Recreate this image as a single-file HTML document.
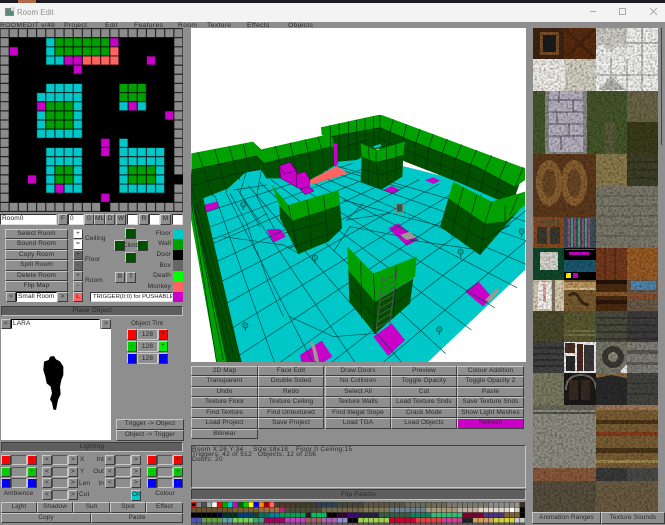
<!DOCTYPE html>
<html><head><meta charset="utf-8"><title>Room Edit</title>
<style>
html,body{margin:0;padding:0;width:665px;height:525px;overflow:hidden;background:#8e8e8e}
body{position:relative;font-family:"Liberation Sans",sans-serif;font-size:7px;color:#2a2a2a}
div{position:absolute;box-sizing:border-box;white-space:pre}
svg{position:absolute;display:block}
.b{background:#8e8e8e;border:1px solid;border-color:#c8c8c8 #3c3c3c #3c3c3c #c8c8c8;text-align:center;line-height:8px;font-size:6.5px;letter-spacing:.1px;overflow:hidden}
.w{background:#fff;border:1px solid;border-color:#333 #ddd #ddd #333;line-height:8px;padding-left:1px;font-size:6.5px;letter-spacing:.1px;color:#222;overflow:hidden}
.t{letter-spacing:.1px;font-size:6.5px;line-height:8px}
.d{background:#5e5e5e;border:1px solid;border-color:#3c3c3c #c0c0c0 #c0c0c0 #3c3c3c;text-align:center;line-height:8px;font-size:6.5px;letter-spacing:.2px}
.f{background:#8e8e8e;border:1px solid;border-color:#555 #c8c8c8 #c8c8c8 #555}
.r{text-align:right}
.m{top:22px;height:7px;line-height:7px;font-size:6.8px;letter-spacing:.3px}
</style></head><body>
<!-- title bar -->
<div style="left:0;top:0;width:665px;height:3px;background:#1c1a20"></div>
<div style="left:18px;top:0;width:18px;height:3px;background:#b06a4a"></div>
<div style="left:0;top:3px;width:665px;height:19px;background:#f3f3f3"></div>
<div style="left:5px;top:8px;width:9px;height:8px;background:#5a8a78;border:1px solid #888"></div>
<div style="left:11px;top:7px;width:4px;height:4px;background:#d8d8d8"></div>
<div style="left:17px;top:6px;font-size:7.8px;letter-spacing:.05px;color:#8f8f8f;line-height:13px">Room Edit</div>
<div style="left:590px;top:11px;width:6px;height:1px;background:#aaa"></div>
<div style="left:619px;top:8px;width:7px;height:7px;border:1px solid #aaa"></div>
<svg style="left:650px;top:8px" width="7" height="7" viewBox="0 0 7 7"><path d="M0 0L7 7M7 0L0 7" stroke="#aaa" stroke-width="1"/></svg>
<!-- menu -->
<div class="m" style="left:0">ROOMEDIT v/49</div>
<div class="m" style="left:64px">Project</div>
<div class="m" style="left:105px">Edit</div>
<div class="m" style="left:134px">Features</div>
<div class="m" style="left:178px">Room</div>
<div class="m" style="left:207px">Texture</div>
<div class="m" style="left:247px">Effects</div>
<div class="m" style="left:288px">Objects</div>

<!-- map -->
<svg style="left:0;top:28px" width="183" height="184" viewBox="0 0 20 20">
<rect width="20" height="20" fill="#000"/>
<g fill="none" stroke-width="1">
<path stroke="#8c8c8c" d="M0 .5h20M0 19.5h11M12 19.5h8M.5 1v18M19.5 1v15M19.5 17v2"/>
<path stroke="#00c8c8" d="M5 1.5h1M5 2.5h1M5 3.5h2M5 6.5h4M4 7.5h5M8 8.5h1M13 8.5h1M15 8.5h1M4 9.5h1M8 9.5h1M4 10.5h1M8 10.5h1M4 11.5h5M13 12.5h1M5 13.5h4M13 13.5h5M5 14.5h4M13 14.5h5M5 15.5h1M8 15.5h1M13 15.5h1M17 15.5h1M5 16.5h1M8 16.5h1M13 16.5h1M17 16.5h1M5 17.5h1M7 17.5h2M13 17.5h5"/>
<path stroke="#00a000" d="M6 1.5h6M6 2.5h6M13 6.5h3M13 7.5h3M5 8.5h3M5 9.5h3M5 10.5h3M6 15.5h2M14 15.5h3M6 16.5h2M14 16.5h3"/>
<path stroke="#c800c8" d="M12 1.5h1M1 2.5h1M7 3.5h2M16 3.5h1M8 4.5h1M4 8.5h1M14 8.5h1M18 9.5h1M11 12.5h1M11 13.5h1M3 16.5h1M6 17.5h1M11 18.5h1"/>
<path stroke="#ff6460" d="M12 2.5h1M9 3.5h4"/>
</g>
<path fill="none" stroke="#000" stroke-opacity=".75" stroke-width=".13" d="M0 0v20M1 0v20M2 0v20M3 0v20M4 0v20M5 0v20M6 0v20M7 0v20M8 0v20M9 0v20M10 0v20M11 0v20M12 0v20M13 0v20M14 0v20M15 0v20M16 0v20M17 0v20M18 0v20M19 0v20M20 0v20M0 0h20M0 1h20M0 2h20M0 3h20M0 4h20M0 5h20M0 6h20M0 7h20M0 8h20M0 9h20M0 10h20M0 11h20M0 12h20M0 13h20M0 14h20M0 15h20M0 16h20M0 17h20M0 18h20M0 19h20M0 20h20"/>
</svg>

<!-- room name row -->
<div class="w" style="left:0;top:214px;width:57px;height:11px">Room0</div>
<div class="b" style="left:58px;top:214px;width:10px;height:11px">F</div>
<div class="w" style="left:68px;top:214px;width:16px;height:11px">0</div>
<div class="b" style="left:84px;top:214px;width:10px;height:11px">0</div>
<div class="b" style="left:94px;top:214px;width:11px;height:11px">ML</div>
<div class="b" style="left:105px;top:214px;width:10px;height:11px">D</div>
<div class="b" style="left:116px;top:214px;width:10px;height:11px">W</div>
<div class="w" style="left:127px;top:214px;width:11px;height:11px"></div>
<div class="b" style="left:139px;top:214px;width:10px;height:11px">R</div>
<div class="w" style="left:149px;top:214px;width:11px;height:11px"></div>
<div class="b" style="left:160px;top:214px;width:11px;height:11px">M</div>
<div class="w" style="left:172px;top:214px;width:11px;height:11px"></div>

<!-- room buttons -->
<div class="b" style="left:5px;top:229px;width:63px;height:10px">Select Room</div>
<div class="b" style="left:5px;top:239px;width:63px;height:11px">Bound Room</div>
<div class="b" style="left:5px;top:250px;width:63px;height:10px">Copy Room</div>
<div class="b" style="left:5px;top:260px;width:63px;height:11px">Split Room</div>
<div class="b" style="left:5px;top:271px;width:63px;height:10px">Delete Room</div>
<div class="b" style="left:5px;top:281px;width:63px;height:11px">Flip Map</div>
<div class="b" style="left:6px;top:292px;width:10px;height:10px">&lt;</div>
<div class="w" style="left:16px;top:292px;width:41px;height:10px;border-color:#000 #fff #fff #000">Small Room</div>
<div class="b" style="left:57px;top:292px;width:11px;height:10px">&gt;</div>

<div class="b" style="left:73px;top:229px;width:10px;height:10px;background:#fff">+</div>
<div class="b" style="left:73px;top:239px;width:10px;height:11px;background:#fff">=</div>
<div class="b" style="left:73px;top:250px;width:10px;height:10px;background:#666">+</div>
<div class="b" style="left:73px;top:260px;width:10px;height:11px;background:#666">-</div>
<div class="b" style="left:73px;top:271px;width:10px;height:10px">+</div>
<div class="b" style="left:73px;top:281px;width:10px;height:11px">-</div>
<div class="b" style="left:73px;top:292px;width:10px;height:10px;background:#ff6460">L</div>
<div class="t" style="left:85px;top:235px">Ceiling</div>
<div class="t" style="left:85px;top:256px">Floor</div>
<div class="t" style="left:85px;top:277px">Room</div>

<div class="b" style="left:125px;top:228px;width:11px;height:11px;background:#005000"></div>
<div class="b" style="left:114px;top:240px;width:11px;height:11px;background:#005000"></div>
<div class="b" style="left:137px;top:240px;width:11px;height:11px;background:#005000"></div>
<div class="b" style="left:125px;top:252px;width:11px;height:11px;background:#005000"></div>
<div class="t" style="left:118px;top:242px;width:26px;text-align:center;font-size:6px;letter-spacing:0">Climb</div>
<div class="b" style="left:115px;top:272px;width:10px;height:11px">B</div>
<div class="b" style="left:126px;top:272px;width:10px;height:11px">T</div>

<div class="t r" style="left:140px;top:230px;width:31px">Floor</div>
<div class="t r" style="left:140px;top:240px;width:31px">Wall</div>
<div class="t r" style="left:140px;top:251px;width:31px">Door</div>
<div class="t r" style="left:140px;top:262px;width:31px">Box</div>
<div class="t r" style="left:140px;top:272px;width:31px">Death</div>
<div class="t r" style="left:130px;top:283px;width:41px">Monkey</div>
<div style="left:173px;top:229px;width:10px;height:10px;background:#00c8c8"></div>
<div style="left:173px;top:239px;width:10px;height:11px;background:#00a000"></div>
<div style="left:173px;top:250px;width:10px;height:10px;background:#000"></div>
<div style="left:173px;top:260px;width:10px;height:11px;background:#666"></div>
<div style="left:173px;top:271px;width:10px;height:10px;background:#00ff00"></div>
<div style="left:173px;top:281px;width:10px;height:11px;background:#ff6460"></div>
<div style="left:173px;top:292px;width:10px;height:10px;background:#c800c8"></div>
<div class="w" style="left:90px;top:292px;width:83px;height:10px;padding-left:2px;font-size:5.9px;letter-spacing:0">TRIGGER(0:0) for PUSHABLE</div>

<div class="d" style="left:1px;top:306px;width:182px;height:10px">Place Object</div>
<div class="b" style="left:1px;top:319px;width:10px;height:10px">&lt;</div>
<div class="w" style="left:11px;top:319px;width:89px;height:10px;border-color:#000 #fff #fff #000">LARA</div>
<div class="b" style="left:101px;top:319px;width:10px;height:10px">&gt;</div>

<!-- object preview -->
<div style="left:1px;top:329px;width:110px;height:111px;background:#fff"></div>
<svg style="left:1px;top:329px" width="110" height="111" viewBox="3 27 330 333"><path fill="#000" d="M132 125L146 120L150 110L162 108L168 118L180 124L190 140L190 165L184 180L180 200L182 222L174 240L168 270L160 268L156 248L150 238L156 220L152 200L140 190L136 170L130 150Z"/></svg>
<div class="t" style="left:122px;top:320px;width:50px;text-align:center">Object Tint</div>

<div class="b" style="left:127px;top:329px;width:10px;height:11px;background:#f00">-</div>
<div class="b" style="left:137px;top:329px;width:21px;height:11px;line-height:9px;border-color:#c8c8c8">128</div>
<div class="b" style="left:158px;top:329px;width:10px;height:11px;background:#f00">+</div>
<div class="b" style="left:127px;top:341px;width:10px;height:11px;background:#0c0">-</div>
<div class="b" style="left:137px;top:341px;width:21px;height:11px;line-height:9px;border-color:#c8c8c8">128</div>
<div class="b" style="left:158px;top:341px;width:10px;height:11px;background:#0e0">+</div>
<div class="b" style="left:127px;top:353px;width:10px;height:11px;background:#00f">-</div>
<div class="b" style="left:137px;top:353px;width:21px;height:11px;line-height:9px;border-color:#c8c8c8">128</div>
<div class="b" style="left:158px;top:353px;width:10px;height:11px;background:#00f">+</div>

<div class="b" style="left:116px;top:419px;width:68px;height:11px">Trigger -&gt; Object</div>
<div class="b" style="left:116px;top:430px;width:68px;height:11px">Object -&gt; Trigger</div>

<div class="d" style="left:1px;top:442px;width:182px;height:10px">Lighting</div>

<!-- ambience -->
<div class="b" style="left:1px;top:455px;width:10px;height:10px;background:#f00">-</div><div class="f" style="left:11px;top:455px;width:16px;height:10px"></div><div class="b" style="left:27px;top:455px;width:10px;height:10px;background:#f00">+</div>
<div class="b" style="left:1px;top:467px;width:10px;height:10px;background:#0c0">-</div><div class="f" style="left:11px;top:467px;width:16px;height:10px"></div><div class="b" style="left:27px;top:467px;width:10px;height:10px;background:#0c0">+</div>
<div class="b" style="left:1px;top:478px;width:10px;height:10px;background:#00f">-</div><div class="f" style="left:11px;top:478px;width:16px;height:10px"></div><div class="b" style="left:27px;top:478px;width:10px;height:10px;background:#00f">+</div>
<div class="t" style="left:0;top:490px;width:37px;text-align:center">Ambience</div>

<!-- X Y Len Cut -->
<div class="b" style="left:42px;top:455px;width:10px;height:10px">&lt;</div><div class="f" style="left:52px;top:455px;width:16px;height:10px"></div><div class="b" style="left:68px;top:455px;width:10px;height:10px">&gt;</div><div class="t" style="left:80px;top:456px">X</div>
<div class="b" style="left:42px;top:467px;width:10px;height:10px">&lt;</div><div class="f" style="left:52px;top:467px;width:16px;height:10px"></div><div class="b" style="left:68px;top:467px;width:10px;height:10px">&gt;</div><div class="t" style="left:80px;top:468px">Y</div>
<div class="b" style="left:42px;top:478px;width:10px;height:10px">&lt;</div><div class="f" style="left:52px;top:478px;width:16px;height:10px"></div><div class="b" style="left:68px;top:478px;width:10px;height:10px">&gt;</div><div class="t" style="left:79px;top:480px">Len</div>
<div class="b" style="left:42px;top:490px;width:10px;height:10px">&lt;</div><div class="f" style="left:52px;top:490px;width:16px;height:10px"></div><div class="b" style="left:68px;top:490px;width:10px;height:10px">&gt;</div><div class="t" style="left:79px;top:491px">Cut</div>

<!-- Int Out In -->
<div class="t r" style="left:90px;top:456px;width:14px">Int</div><div class="b" style="left:105px;top:455px;width:10px;height:10px">&lt;</div><div class="f" style="left:115px;top:455px;width:16px;height:10px"></div><div class="b" style="left:131px;top:455px;width:10px;height:10px">&gt;</div>
<div class="t r" style="left:90px;top:468px;width:14px">Out</div><div class="b" style="left:105px;top:467px;width:10px;height:10px">&lt;</div><div class="f" style="left:115px;top:467px;width:16px;height:10px"></div><div class="b" style="left:131px;top:467px;width:10px;height:10px">&gt;</div>
<div class="t r" style="left:90px;top:480px;width:14px">In</div><div class="b" style="left:105px;top:478px;width:10px;height:10px">&lt;</div><div class="f" style="left:115px;top:478px;width:16px;height:10px"></div><div class="b" style="left:131px;top:478px;width:10px;height:10px">&gt;</div>
<div class="b" style="left:131px;top:490px;width:10px;height:11px;background:#00c8c8">On</div>

<!-- colour -->
<div class="b" style="left:147px;top:455px;width:10px;height:10px;background:#f00">-</div><div class="f" style="left:157px;top:455px;width:16px;height:10px"></div><div class="b" style="left:173px;top:455px;width:10px;height:10px;background:#f00">+</div>
<div class="b" style="left:147px;top:467px;width:10px;height:10px;background:#0c0">-</div><div class="f" style="left:157px;top:467px;width:16px;height:10px"></div><div class="b" style="left:173px;top:467px;width:10px;height:10px;background:#0c0">+</div>
<div class="b" style="left:147px;top:478px;width:10px;height:10px;background:#00f">-</div><div class="f" style="left:157px;top:478px;width:16px;height:10px"></div><div class="b" style="left:173px;top:478px;width:10px;height:10px;background:#00f">+</div>
<div class="t" style="left:147px;top:490px;width:36px;text-align:center">Colour</div>

<div class="b" style="left:1px;top:502px;width:36px;height:11px">Light</div>
<div class="b" style="left:37px;top:502px;width:36px;height:11px">Shadow</div>
<div class="b" style="left:73px;top:502px;width:37px;height:11px">Sun</div>
<div class="b" style="left:110px;top:502px;width:36px;height:11px">Spot</div>
<div class="b" style="left:146px;top:502px;width:37px;height:11px">Effect</div>
<div class="b" style="left:1px;top:513px;width:90px;height:10px">Copy</div>
<div class="b" style="left:91px;top:513px;width:92px;height:10px">Paste</div>

<!-- 3D view -->
<div style="left:191px;top:28px;width:335px;height:334px;background:#fff"></div>
<svg style="left:191px;top:28px" width="335" height="334" viewBox="3 -306 1005 1002">
<polygon fill="#00c8c8" points="0,150 445,60 1005,200 1005,420 710,700 100,700"/>
<g fill="#c800c8">
<polygon points="40,225 80,215 88,232 50,245"/><polygon points="230,298 270,297 288,320 250,338"/><polygon points="595,295 625,280 685,330 650,347"/><polygon points="580,180 605,168 630,180 610,192"/><polygon points="705,150 730,142 750,152 730,162"/><polygon points="825,485 865,455 905,500 880,530"/><polygon points="550,620 605,580 645,630 595,678"/><polygon points="330,675 395,632 427,680 395,700 335,700"/>
</g>
<g stroke="#004848" stroke-width="2" fill="none">
<path d="M49 246L488 100M59 291L534 111M70 340L582 123M82 394L634 135M95 454L689 148M110 520L747 162M127 594L809 177M145 678L876 193M166 772L949 210M190 880L1026 228M218 1004L1109 248"/>
<path d="M74 195L374 1035M107 186L487 930M141 176L589 836M175 167L681 750M209 157L767 671M242 148L844 600M276 138L915 534M310 128L981 473M344 119L1041 417M378 109L1098 364M411 100L1151 316"/>
<path d="M60 330Q150 300 230 250M100 320L280 345L330 372M200 360L240 470L280 560M660 330L870 360M460 210L640 260L760 290M450 120L640 175M300 560L430 620L560 610M430 365L480 290L640 320M520 220L470 270L600 250M120 190L170 280L200 370M169 125L150 190L210 290M214 120L200 200L255 300M130 180L230 165"/>
</g>
<!-- back right wall and apex -->
<polygon fill="#005000" points="393,-8 565,-45 1005,115 975,200 960,225 800,155 645,95 565,55 500,90 445,95 430,100 425,50"/>
<polygon fill="#00a000" points="393,-8 565,-45 570,-7 420,20 395,15"/>
<polygon fill="#00a000" points="565,-45 575,-45 1005,115 1005,150 975,172 860,110 645,25 570,-7"/>
<!-- back left wall -->
<polygon fill="#005000" points="4,120 199,78 222,100 425,50 445,100 432,108 360,150 285,145 229,145 214,120 169,125 114,175 39,205 0,190"/>
<polygon fill="#00a000" points="4,70 189,35 214,58 384,20 425,10 432,50 222,100 199,78 4,120"/>
<!-- left wall -->
<polygon fill="#005000" points="0,125 40,205 155,700 110,700 0,190"/>
<polygon fill="#00a000" points="0,190 110,700 80,700 0,250"/>
<g stroke="#002e10" stroke-width="2" fill="none">
<path d="M4 120L199 78L222 100L425 50M420 20L570 -7L645 25L860 110L975 172M4 168L124 135L209 118M570 25L645 60L860 150L960 200M430 100L430 60L565 20"/>
<path d="M24 68L39 110L56 165L70 200M74 58L86 100L100 150L110 185M118 50L130 93L142 130L150 150M160 42L170 85L178 122"/>
<path d="M256 48L268 90L275 125M300 38L310 80L320 125M345 28L355 68L365 130M384 20L395 58L405 115"/>
<path d="M420 -14L422 50M447 -20L449 95M475 -26L476 90M500 -31L501 80M525 -36L526 75M550 -41L550 60M570 -45L570 -7L565 55"/>
<path d="M610 -32L600 6L595 70M650 -17L640 23L635 90M690 -3L678 38L672 105M730 12L716 53L708 120M772 27L757 69L748 135M815 43L798 85L786 150M860 60L842 103L828 167M905 76L885 123L870 185M950 93L928 147L915 205M1000 111L975 172"/>
<path d="M0 190L80 700M8 220L100 690M15 240L120 690M20 260L135 690M5 170L155 700"/>
</g>
<!-- magenta stack -->
<polygon fill="#c800c8" points="430,40 442,40 443,105 432,108"/>
<polygon fill="#ff6460" points="360,150 440,108 475,130 362,165"/>
<g fill="#c800c8" stroke="#400040" stroke-width="1.5">
<polygon points="268,108 300,96 320,122 320,172 290,155 272,145"/>
<polygon points="268,108 300,96 318,122 283,132"/>
<polygon points="320,132 345,124 358,145 358,175 335,178 320,172"/>
<polygon points="330,178 358,170 372,183 345,194"/>
</g>
<!-- pillar 1 -->
<polygon fill="#005000" points="268,225 305,272 450,225 456,295 415,335 325,372 270,265"/>
<polygon fill="#00a000" points="245,165 295,225 445,180 450,225 305,272 268,225"/>
<g stroke="#002e10" stroke-width="2" fill="none">
<path d="M295 225L305 272M350 210L358 258M400 195L406 242M305 272L325 372M358 258L365 352M406 242L413 335M280 310L415 275M295 355L450 300M270 230L305 272"/>
</g>
<!-- pillar 2 -->
<polygon fill="#005000" points="515,80 558,95 640,75 637,140 575,178 512,155"/>
<polygon fill="#00a000" points="512,40 558,60 645,35 640,75 558,95 515,80"/>
<g stroke="#002e10" stroke-width="2" fill="none">
<path d="M535 50L538 88M558 60L558 95M590 52L590 88M618 43L618 82M515 118L575 135L637 110M538 88L535 165M558 95L565 173M590 88L594 165M618 82L617 150"/>
</g>
<polygon fill="#00c8c8" points="548,50 570,42 575,48 556,55"/>
<!-- pillar 3 -->
<polygon fill="#005000" points="775,205 890,280 1000,225 870,375 750,290"/>
<polygon fill="#00a000" points="790,155 905,215 1005,185 1005,225 945,275 885,280 775,205"/>
<g stroke="#002e10" stroke-width="2" fill="none">
<path d="M820 172L805 225M860 195L845 250M905 215L885 280M945 225L945 275M985 195L960 255M805 225L785 320M845 250L825 345M885 280L870 375M760 255L880 330L960 285"/>
</g>
<!-- pillar 4 -->
<polygon fill="#005000" points="475,420 555,515 670,445 660,520 555,612 478,515"/>
<polygon fill="#00a000" points="472,350 550,430 555,515 475,420"/>
<polygon fill="#00a000" points="680,380 675,440 555,515 550,430"/>
<g stroke="#002e10" stroke-width="2" fill="none">
<path d="M512 395L514 470M510 470L515 565M618 405L615 480M615 480L610 565M477 470L555 565L665 485M550 430L555 515L555 612"/>
</g>
<!-- ladder -->
<g stroke="#505850" stroke-width="3" fill="none">
<path d="M578 440L558 605M622 415L598 590M578 455L620 430M575 475L618 450M573 495L615 470M571 515L612 492M569 535L609 512M566 555L606 532M563 575L602 552M560 595L599 572"/>
</g>
<!-- sprites -->
<g fill="#9a9a92">
<polygon points="360,632 372,640 382,670 388,698 374,692 368,660"/>
<polygon points="630,315 660,305 678,322 650,330"/>
<polygon points="885,510 920,475 930,480 900,515"/>
</g>
<rect x="620" y="222" width="18" height="24" fill="#006860" stroke="#e06040" stroke-width="2"/>
<!-- bulbs -->
<g fill="#00a8a0" stroke="#005040" stroke-width="2">
<circle cx="160" cy="223" r="8"/><circle cx="375" cy="383" r="8"/><circle cx="812" cy="365" r="8"/><circle cx="166" cy="586" r="8"/><circle cx="748" cy="598" r="8"/><circle cx="995" cy="304" r="8"/>
</g>
<g stroke="#304030" stroke-width="3">
<path d="M160 231v9M375 391v9M812 373v9M166 594v9M748 606v9M995 312v9"/>
</g>
</svg>

<!-- main buttons -->
<div class="b" style="left:191px;top:366px;width:67px;height:10px">2D Map</div><div class="b" style="left:258px;top:366px;width:66px;height:10px">Face Edit</div><div class="b" style="left:325px;top:366px;width:66px;height:10px">Draw Doors</div><div class="b" style="left:391px;top:366px;width:66px;height:10px">Preview</div><div class="b" style="left:457px;top:366px;width:67px;height:10px">Colour Addition</div>
<div class="b" style="left:191px;top:376px;width:67px;height:11px">Transparent</div><div class="b" style="left:258px;top:376px;width:66px;height:11px">Double Sided</div><div class="b" style="left:325px;top:376px;width:66px;height:11px">No Collision</div><div class="b" style="left:391px;top:376px;width:66px;height:11px">Toggle Opacity</div><div class="b" style="left:457px;top:376px;width:67px;height:11px">Toggle Opacity 2</div>
<div class="b" style="left:191px;top:387px;width:67px;height:10px">Undo</div><div class="b" style="left:258px;top:387px;width:66px;height:10px">Redo</div><div class="b" style="left:325px;top:387px;width:66px;height:10px">Select All</div><div class="b" style="left:391px;top:387px;width:66px;height:10px">Cut</div><div class="b" style="left:457px;top:387px;width:67px;height:10px">Paste</div>
<div class="b" style="left:191px;top:397px;width:67px;height:11px">Texture Floor</div><div class="b" style="left:258px;top:397px;width:66px;height:11px">Texture Ceiling</div><div class="b" style="left:325px;top:397px;width:66px;height:11px">Texture Walls</div><div class="b" style="left:391px;top:397px;width:66px;height:11px">Load Texture Snds</div><div class="b" style="left:457px;top:397px;width:67px;height:11px">Save Texture Snds</div>
<div class="b" style="left:191px;top:408px;width:67px;height:10px">Find Texture</div><div class="b" style="left:258px;top:408px;width:66px;height:10px">Find Untextured</div><div class="b" style="left:325px;top:408px;width:66px;height:10px">Find Illegal Slope</div><div class="b" style="left:391px;top:408px;width:66px;height:10px">Crack Mode</div><div class="b" style="left:457px;top:408px;width:67px;height:10px">Show Light Meshes</div>
<div class="b" style="left:191px;top:418px;width:67px;height:11px">Load Project</div><div class="b" style="left:258px;top:418px;width:66px;height:11px">Save Project</div><div class="b" style="left:325px;top:418px;width:66px;height:11px">Load TGA</div><div class="b" style="left:391px;top:418px;width:66px;height:11px">Load Objects</div><div class="b" style="left:457px;top:418px;width:67px;height:11px;background:#c800c8">Refresh</div>
<div class="b" style="left:191px;top:429px;width:67px;height:10px">Bilinear</div>

<!-- info -->
<div style="left:191px;top:445px;width:335px;height:43px;background:#8e8e8e;border:1px solid;border-color:#444 #c8c8c8 #c8c8c8 #444"></div>
<div class="t" style="left:192px;top:446px;letter-spacing:.3px">Room X:26 Y:34</div>
<div class="t" style="left:253px;top:446px;letter-spacing:.3px">Size:18x18</div>
<div class="t" style="left:296px;top:446px;letter-spacing:.3px">Floor:0 Ceiling:15</div>
<div class="t" style="left:192px;top:451px;letter-spacing:.3px">Triggers: 42 of 512</div>
<div class="t" style="left:258px;top:451px;letter-spacing:.3px">Objects: 12 of 256</div>
<div class="t" style="left:192px;top:456px;letter-spacing:.3px">Doors: 20</div>

<div class="d" style="left:191px;top:489px;width:335px;height:11px;line-height:9px">Flip Palette</div>

<!-- palette -->
<svg style="left:191px;top:502px" width="334" height="23" viewBox="0 0 64 4.4" preserveAspectRatio="none">
<g fill="none" stroke-width="1">
<path stroke="#000" d="M0 .5h1M63 1.5h1M0 2.5h5M26 2.5h2M63 2.5h1"/>
<path stroke="#808080" d="M1 .5h1"/><path stroke="#505050" d="M2 .5h1"/><path stroke="#a8a8a8" d="M3 .5h1"/><path stroke="#fff" d="M4 .5h1M61 1.5h1"/><path stroke="#f00" d="M5 .5h1"/><path stroke="#0a0" d="M6 .5h1"/><path stroke="#0cc" d="M7 .5h1"/><path stroke="#c0c" d="M8 .5h1"/><path stroke="#060" d="M9 .5h1"/><path stroke="#0c0" d="M10 .5h1"/><path stroke="#ff0" d="M11 .5h1"/><path stroke="#00f" d="M12 .5h1"/><path stroke="#f80" d="M13 .5h1"/><path stroke="#a00" d="M14 .5h1"/><path stroke="#f66" d="M15 .5h1"/>
<path stroke="#4a3a28" d="M16 .5h4"/><path stroke="#3e3e2c" d="M20 .5h4"/><path stroke="#2e4050" d="M24 .5h4"/><path stroke="#45453a" d="M28 .5h5"/><path stroke="#5a5545" d="M33 .5h8"/><path stroke="#6a6a58" d="M41 .5h8"/><path stroke="#7a7a70" d="M49 .5h8"/><path stroke="#8a8a88" d="M57 .5h5"/><path stroke="#a09080" d="M62 .5h1"/><path stroke="#3a3028" d="M63 .5h1"/>
<path stroke="#6a5428" d="M0 1.5h8"/><path stroke="#7a6030" d="M8 1.5h5"/><path stroke="#a06a3c" d="M13 1.5h4"/><path stroke="#c0207a" d="M17 1.5h1"/><path stroke="#504a38" d="M18 1.5h7"/><path stroke="#706848" d="M25 1.5h8"/><path stroke="#807850" d="M33 1.5h5"/><path stroke="#6a8090" d="M38 1.5h7"/><path stroke="#a89878" d="M45 1.5h6"/><path stroke="#c0b0a0" d="M51 1.5h4"/><path stroke="#e0d8c8" d="M55 1.5h6"/><path stroke="#d0d0c0" d="M62 1.5h1"/>
<path stroke="#000050" d="M5 2.5h1"/><path stroke="#003020" d="M6 2.5h3"/><path stroke="#004080" d="M9 2.5h3"/><path stroke="#204020" d="M12 2.5h1"/><path stroke="#007060" d="M13 2.5h2"/><path stroke="#0080a0" d="M15 2.5h2"/><path stroke="#00a050" d="M17 2.5h5"/><path stroke="#202020" d="M22 2.5h1"/><path stroke="#00c060" d="M23 2.5h3"/><path stroke="#300030" d="M28 2.5h2"/><path stroke="#400080" d="M30 2.5h2"/><path stroke="#202040" d="M32 2.5h4"/><path stroke="#306040" d="M36 2.5h6"/><path stroke="#108060" d="M42 2.5h4"/><path stroke="#30c070" d="M46 2.5h6"/><path stroke="#800030" d="M52 2.5h4"/><path stroke="#503080" d="M56 2.5h4"/><path stroke="#806030" d="M60 2.5h3"/>
<path stroke="#5050c0" d="M0 3.5h2"/><path stroke="#60a040" d="M2 3.5h4"/><path stroke="#60a0a0" d="M6 3.5h2"/><path stroke="#70d050" d="M8 3.5h4"/><path stroke="#40a080" d="M12 3.5h2"/><path stroke="#a00060" d="M14 3.5h4"/><path stroke="#c040c0" d="M18 3.5h4"/><path stroke="#a06060" d="M22 3.5h3"/><path stroke="#b060b0" d="M25 3.5h3"/><path stroke="#9090d0" d="M28 3.5h2"/><path stroke="#000" d="M30 3.5h2"/><path stroke="#a0d050" d="M32 3.5h6"/><path stroke="#c80030" d="M38 3.5h5"/><path stroke="#e04040" d="M43 3.5h5"/><path stroke="#d04090" d="M48 3.5h4"/><path stroke="#202020" d="M52 3.5h2"/><path stroke="#d0a060" d="M54 3.5h4"/><path stroke="#d0d040" d="M58 3.5h4"/><path stroke="#c8c8c8" d="M62 3.5h2"/>
<path stroke="#606060" d="M0 4.5h64"/>
</g>
<path fill="none" stroke="#2a2a2a" stroke-width=".1" d="M0 0v4.4M1 0v4.4M2 0v4.4M3 0v4.4M4 0v4.4M5 0v4.4M6 0v4.4M7 0v4.4M8 0v4.4M9 0v4.4M10 0v4.4M11 0v4.4M12 0v4.4M13 0v4.4M14 0v4.4M15 0v4.4M16 0v4.4M17 0v4.4M18 0v4.4M19 0v4.4M20 0v4.4M21 0v4.4M22 0v4.4M23 0v4.4M24 0v4.4M25 0v4.4M26 0v4.4M27 0v4.4M28 0v4.4M29 0v4.4M30 0v4.4M31 0v4.4M32 0v4.4M33 0v4.4M34 0v4.4M35 0v4.4M36 0v4.4M37 0v4.4M38 0v4.4M39 0v4.4M40 0v4.4M41 0v4.4M42 0v4.4M43 0v4.4M44 0v4.4M45 0v4.4M46 0v4.4M47 0v4.4M48 0v4.4M49 0v4.4M50 0v4.4M51 0v4.4M52 0v4.4M53 0v4.4M54 0v4.4M55 0v4.4M56 0v4.4M57 0v4.4M58 0v4.4M59 0v4.4M60 0v4.4M61 0v4.4M62 0v4.4M63 0v4.4M64 0v4.4M0 0h64M0 1h64M0 2h64M0 3h64M0 4h64"/>
<rect x=".1" y=".1" width=".8" height=".8" fill="none" stroke="#f00" stroke-width=".2"/>
</svg>

<!-- textures -->
<svg style="left:533px;top:28px" width="125" height="484" viewBox="0 0 125 484" shape-rendering="crispEdges">
<defs>
<filter id="n" x="0" y="0" width="100%" height="100%"><feTurbulence type="fractalNoise" baseFrequency=".45" numOctaves="2" seed="4"/><feColorMatrix values="0 0 0 0 0  0 0 0 0 0  0 0 0 0 0  1.6 0 0 0 -.62"/></filter>
</defs>
<rect width="125" height="484" fill="#333"/>
<!-- row 0/1 -->
<rect x="0" y="0" width="31" height="31" fill="#3e2412"/><rect x="7" y="4" width="19" height="23" fill="#7a5028"/><rect x="10" y="7" width="13" height="17" fill="#1c1c1c"/>
<rect x="31" y="0" width="32" height="31" fill="#5a2c10"/><path d="M33 2L61 29M61 2L33 29" stroke="#48240c" stroke-width="3"/>
<rect x="63" y="0" width="31" height="31" fill="#cfcfc8"/><polygon points="63,20 70,16 78,24 86,16 94,22 94,31 63,31" fill="#f0f0ee"/>
<rect x="94" y="0" width="31" height="31" fill="#f4f4f2"/><path d="M109 0v31M94 15h31" stroke="#888" stroke-width="1"/>
<rect x="0" y="31" width="32" height="32" fill="#f3f1ec"/><rect x="32" y="31" width="31" height="32" fill="#d6d3c5"/>
<rect x="63" y="31" width="62" height="32" fill="#f4f4f2"/><path d="M78 31v32M109 31v32M63 47h62M94 31v32" stroke="#999" stroke-width="1"/><polygon points="66,62 78,48 92,62" fill="#b8b8b2"/>
<!-- grass -->
<rect x="0" y="63" width="94" height="63" fill="#46572a"/>
<rect x="12" y="63" width="42" height="63" fill="#8a8a88"/><rect x="16" y="63" width="34" height="61" fill="#b9b3c2"/>
<path d="M16 72h34M16 84h34M16 96h34M16 108h34M26 63v12M40 72v12M24 84v12M36 96v12M28 108v14" stroke="#5a5668" stroke-width="1"/>
<rect x="94" y="63" width="31" height="31" fill="#6c6648"/><rect x="94" y="94" width="31" height="32" fill="#3a3c1a"/>
<rect x="72" y="94" width="10" height="32" fill="#5a5a3c"/>
<!-- carpet -->
<rect x="0" y="126" width="63" height="63" fill="#5e3a1c"/>
<ellipse cx="16" cy="155" rx="13" ry="23" fill="#8a6030"/><ellipse cx="16" cy="155" rx="7" ry="14" fill="#6a4824"/><ellipse cx="41" cy="155" rx="13" ry="23" fill="#8a6030"/><ellipse cx="41" cy="155" rx="7" ry="14" fill="#6a4824"/>
<rect x="63" y="126" width="31" height="32" fill="#8c7c4c"/><rect x="94" y="126" width="31" height="32" fill="#3e4028"/><path d="M94 134h31M94 142h31M94 150h31" stroke="#2a2c18"/>
<rect x="63" y="158" width="62" height="62" fill="#7c7a6a"/><path d="M63 168h62M63 178h62M63 188h62M63 198h62M63 208h62" stroke="#5e5c50"/>
<!-- window etc -->
<rect x="0" y="189" width="31" height="31" fill="#8a4a22"/><rect x="0" y="189" width="1" height="31" fill="#f03030"/><rect x="4" y="199" width="10" height="17" fill="#3a3a30"/><rect x="17" y="199" width="10" height="17" fill="#3a3a30"/><rect x="4" y="192" width="23" height="5" fill="#6a5030"/>
<rect x="31" y="189" width="32" height="31" fill="#3c5058"/><path d="M36 190v29M42 190v29M50 190v29M56 190v29" stroke="#9a4a88" stroke-width="2"/><path d="M39 190v29M46 190v29M53 190v29" stroke="#50a070" stroke-width="2"/>
<rect x="0" y="220" width="31" height="32" fill="#104a2c"/><rect x="7" y="224" width="18" height="18" fill="#d8d8d0"/>
<rect x="31" y="220" width="32" height="12" fill="#000"/><rect x="32" y="221" width="30" height="1" fill="#e02060"/><rect x="36" y="224" width="20" height="3" fill="#c800c8"/><rect x="31" y="232" width="32" height="12" fill="#1a5a70"/><rect x="31" y="244" width="32" height="8" fill="#000"/><rect x="33" y="245" width="5" height="5" fill="#ff0"/><rect x="40" y="245" width="5" height="5" fill="#c0c"/>
<rect x="63" y="220" width="31" height="32" fill="#763a1c"/><path d="M72 220v32M82 220v32" stroke="#4a2410" stroke-width="1"/><rect x="94" y="220" width="31" height="32" fill="#9a5c24"/>
<!-- row -->
<rect x="0" y="252" width="31" height="31" fill="#d8ccb0"/><rect x="5" y="254" width="13" height="27" fill="#f8f4f0"/><rect x="10" y="256" width="3" height="18" fill="#e8a0a0"/><rect x="19" y="252" width="3" height="31" fill="#807860"/>
<rect x="31" y="252" width="32" height="31" fill="#7a5c30"/><rect x="31" y="254" width="32" height="6" fill="#c09a60"/><rect x="31" y="260" width="32" height="2" fill="#d8b888"/><path d="M36 268q6-6 10 2t10 6" stroke="#3a2a14" stroke-width="3" fill="none"/>
<rect x="63" y="252" width="31" height="31" fill="#4c2c12"/><rect x="63" y="252" width="31" height="4" fill="#221408"/><rect x="63" y="264" width="31" height="4" fill="#8a5a2c"/><rect x="63" y="272" width="31" height="4" fill="#2c1808"/>
<rect x="94" y="252" width="31" height="31" fill="#6a5a48"/><rect x="98" y="253" width="25" height="9" fill="#4f86b0"/><rect x="94" y="265" width="31" height="6" fill="#8a5030"/>
<!-- bricks -->
<rect x="0" y="283" width="31" height="31" fill="#4a4a2c"/><rect x="31" y="283" width="32" height="31" fill="#5a5a32"/><path d="M31 303h32M31 307h32" stroke="#8a8a60"/>
<rect x="63" y="283" width="31" height="31" fill="#4c4e3e"/><rect x="94" y="283" width="31" height="31" fill="#3e3e3e"/><path d="M63 290h62M63 297h62M63 304h62M63 311h62" stroke="#252520"/>
<rect x="0" y="314" width="31" height="31" fill="#424242"/><path d="M0 320h31M0 326h31M0 332h31M0 338h31" stroke="#222"/>
<rect x="31" y="314" width="32" height="31" fill="#f4f4f4"/><rect x="32" y="315" width="10" height="10" fill="#4a3020"/><rect x="33" y="328" width="9" height="15" fill="#2a2a2a"/><rect x="44" y="316" width="6" height="27" fill="#4a2a20"/><rect x="51" y="317" width="10" height="26" fill="#3a3a3a"/>
<rect x="63" y="314" width="31" height="31" fill="#78786a"/><circle cx="80" cy="329" r="11" fill="#3a3a34"/><circle cx="80" cy="329" r="5" fill="#8a8a7a"/><polygon points="88,342 94,336 94,345 88,345" fill="#eee"/>
<rect x="94" y="314" width="31" height="31" fill="#82827a"/><rect x="94" y="322" width="31" height="4" fill="#5a5a54"/><rect x="94" y="334" width="31" height="3" fill="#5e5e58"/>
<rect x="0" y="345" width="31" height="32" fill="#7c7c62"/>
<rect x="31" y="345" width="32" height="32" fill="#1c1a18"/><rect x="36" y="352" width="9" height="20" fill="#3a2a20"/><rect x="48" y="352" width="9" height="20" fill="#3a2a20"/><path d="M33 362q0-15 15-15t15 15" stroke="#6a6a60" stroke-width="2" fill="none"/>
<rect x="63" y="345" width="31" height="32" fill="#2a2a2a"/><polygon points="63,345 94,345 94,350 78,347 63,350" fill="#8a7040"/>
<rect x="94" y="345" width="31" height="32" fill="#454540"/><path d="M94 355h31M94 366h31" stroke="#2c2c28"/>
<!-- large -->
<rect x="0" y="377" width="63" height="63" fill="#8e8e82"/><rect x="0" y="377" width="63" height="5" fill="#6a6a5c"/><rect x="0" y="384" width="63" height="2" fill="#54544a"/>
<rect x="63" y="377" width="62" height="63" fill="#7c5e34"/><rect x="63" y="377" width="62" height="5" fill="#a07a58"/><rect x="63" y="392" width="62" height="4" fill="#4e3418"/><rect x="63" y="404" width="62" height="4" fill="#8a3c1c"/><rect x="63" y="420" width="62" height="5" fill="#4a3618"/><rect x="63" y="432" width="62" height="3" fill="#a08a50"/>
<rect x="0" y="440" width="63" height="13" fill="#8a5a3c"/><rect x="0" y="453" width="63" height="31" fill="#58503e"/>
<rect x="63" y="440" width="62" height="13" fill="#3a3a3a"/><rect x="94" y="440" width="31" height="13" fill="#4a4a48"/><rect x="63" y="453" width="62" height="31" fill="#6c5c42"/>
<rect width="125" height="484" filter="url(#n)" opacity=".5"/>
</svg>
<div style="left:661px;top:28px;width:1px;height:117px;background:#444"></div>

<div class="b" style="left:532px;top:512px;width:69px;height:12px;line-height:10px">Animation Ranges</div>
<div class="b" style="left:601px;top:512px;width:64px;height:12px;line-height:10px">Texture Sounds</div>
</body></html>
